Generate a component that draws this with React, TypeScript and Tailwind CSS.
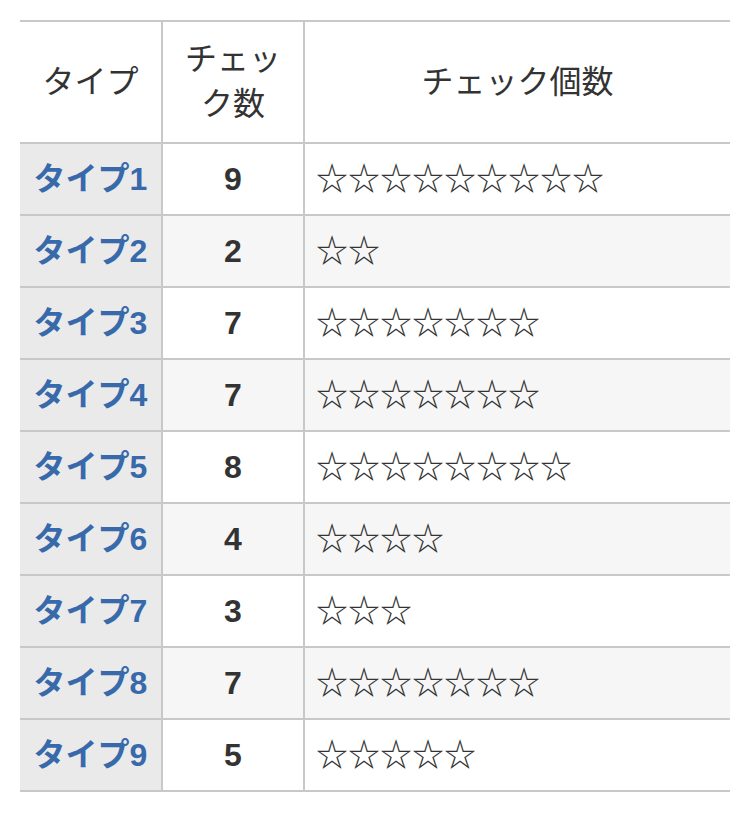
import React from "react";

const rows: [string, number][] = [
  ["タイプ1", 9],
  ["タイプ2", 2],
  ["タイプ3", 7],
  ["タイプ4", 7],
  ["タイプ5", 8],
  ["タイプ6", 4],
  ["タイプ7", 3],
  ["タイプ8", 7],
  ["タイプ9", 5],
];

export default function App() {
  return (
    <div
      className="w-[750px] h-[833px] bg-white px-5 pt-5 text-[#333] text-[32px] leading-[45px]"
      style={{ fontFamily: '"Liberation Sans", "Noto Sans CJK JP", sans-serif' }}
    >
      <div className="border-t-2 border-[#c8c8c8]">
        <div className="flex border-b-2 border-[#c8c8c8]">
          <div className="w-[141px] h-[120px] flex items-center justify-center">タイプ</div>
          <div className="w-[144px] h-[120px] border-x-2 border-[#c8c8c8] flex items-center justify-center px-2 text-center">
            チェック数
          </div>
          <div className="flex-1 h-[120px] flex items-center justify-center">チェック個数</div>
        </div>
        {rows.map(([name, n], i) => (
          <div
            key={name}
            className={`flex border-b-2 border-[#c8c8c8] ${i % 2 === 1 ? "bg-[#f6f6f6]" : "bg-white"}`}
          >
            <div className="w-[141px] h-[70px] bg-[#eaeaea] flex items-center justify-center font-bold text-[#3769ab]">
              {name}
            </div>
            <div className="w-[144px] h-[70px] border-x-2 border-[#c8c8c8] flex items-center justify-center font-bold">
              {n}
            </div>
            <div className="flex-1 h-[70px] flex items-center pl-[11px]">{"☆".repeat(n)}</div>
          </div>
        ))}
      </div>
    </div>
  );
}
